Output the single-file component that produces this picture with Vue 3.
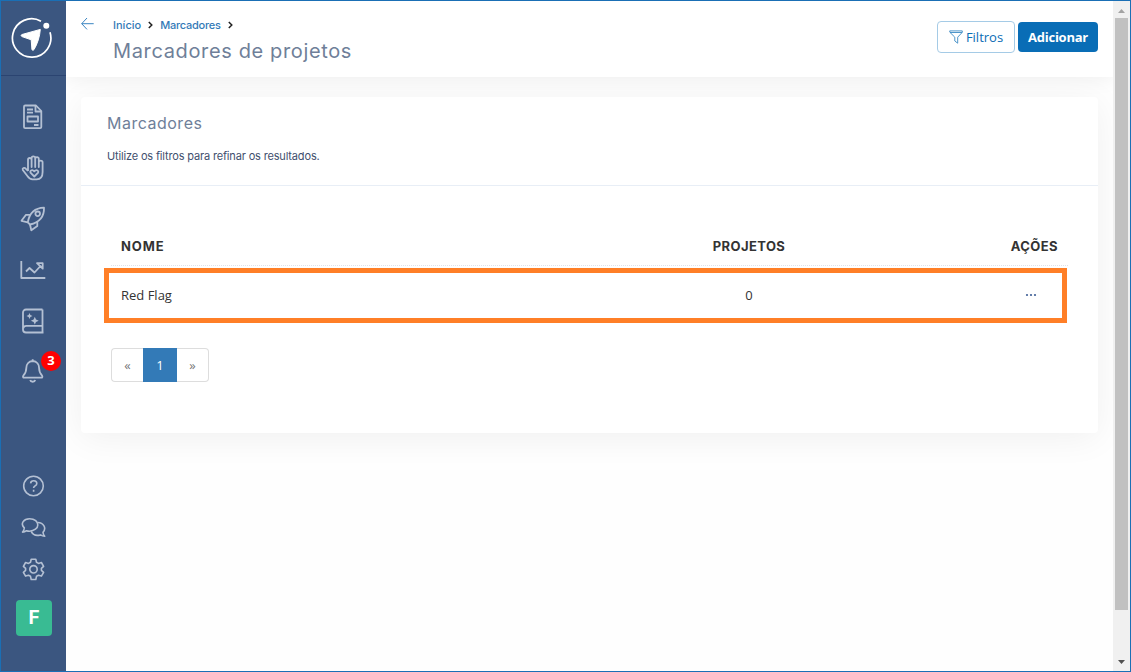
<template>
  <div class="window">
    <aside class="sidebar">
      <div class="brand">
        <svg width="44" height="44" viewBox="0 0 44 44">
          <path d="M31 5.200A19.200 19.200 0 1 0 40 16.300" fill="none" stroke="#fff" stroke-width="1.7" />
          <circle cx="36.300" cy="9.800" r="3" fill="#fff" />
          <path d="M30.300 13.400 12 18.500c-1.200.5-1.100 1.500 0 2.100l9.200 3.200.7 9.500c.2 1.200 1.300 1.300 2.100.3 3.500-6 5.800-13 6.300-20.200Z" fill="#fff" stroke="#fff" stroke-linejoin="round" />
        </svg>
      </div>
      <nav class="menu">
        <a v-for="item in menu" :key="item.name" class="menu-item" :title="item.name">
          <svg width="26" height="26" viewBox="0 0 26 26">
            <path v-for="d in item.paths" :key="d" :d="d" />
            <path v-if="item.solid" class="solid" :d="item.solid" />
          </svg>
          <span v-if="item.badge" class="badge">{{ item.badge }}</span>
        </a>
      </nav>
      <div class="menu-bottom">
        <a v-for="item in bottomMenu" :key="item.name" class="bottom-item" :title="item.name">
          <svg width="26" height="26" viewBox="0 0 26 26">
            <path v-for="d in item.paths" :key="d" :d="d" />
          </svg>
        </a>
        <div class="avatar">F</div>
      </div>
    </aside>

    <main class="content">
      <header class="page-header">
        <svg class="back" width="14" height="14" viewBox="0 0 14 14">
          <path d="M6 1 .7 6.700l5.300 5.700M.7 6.700h12" />
        </svg>
        <div class="heading">
          <div class="breadcrumb">
            <a class="crumb-home">Início</a>
            <svg width="5" height="8" viewBox="0 0 5 8"><path d="m.8 1 3 3-3 3" /></svg>
            <a class="crumb-page">Marcadores</a>
            <svg width="5" height="8" viewBox="0 0 5 8"><path d="m.8 1 3 3-3 3" /></svg>
          </div>
          <h1>Marcadores de projetos</h1>
        </div>
        <div class="actions">
          <button class="btn btn-outline">
            <svg width="14" height="14" viewBox="0 0 14 14">
              <path d="M.7.9h12.600v1.400L8.700 7.200v6L5.800 11V7.200L.9 2.300ZM1 2.500h12" />
            </svg>
            <span>Filtros</span>
          </button>
          <button class="btn btn-primary"><span>Adicionar</span></button>
        </div>
      </header>

      <section class="card">
        <div class="card-header">
          <h2>Marcadores</h2>
          <p>Utilize os filtros para refinar os resultados.</p>
        </div>
        <div class="card-body">
          <div class="table">
            <div class="row row-head">
              <span><b class="th-name">NOME</b></span>
              <span class="center"><b>PROJETOS</b></span>
              <span class="right"><b>AÇÕES</b></span>
            </div>
            <div v-for="row in rows" :key="row.name" class="row row-item">
              <span>{{ row.name }}</span>
              <span class="center">{{ row.projects }}</span>
              <span class="right">
                <svg class="dots" width="12" height="4" viewBox="0 0 12 4">
                  <circle cx="2" cy="2" r="1.1" />
                  <circle cx="6" cy="2" r="1.1" />
                  <circle cx="10" cy="2" r="1.1" />
                </svg>
              </span>
            </div>
          </div>
          <div class="pagination">
            <span class="page">«</span>
            <span class="page active">1</span>
            <span class="page">»</span>
          </div>
        </div>
      </section>
    </main>

    <div class="scrollbar">
      <svg width="17" height="17" viewBox="0 0 17 17"><path d="M5 12h7L8.500 8Z" fill="#a3a3a3" /></svg>
      <div class="thumb"></div>
      <svg width="17" height="17" viewBox="0 0 17 17"><path d="M5 6h7l-3.500 4Z" fill="#505050" /></svg>
    </div>
  </div>
</template>

<script setup>
import { ref } from 'vue'

const menu = ref([
  {
    name: 'Editais',
    paths: [
      'M5.500 1.500H16l5.300 5.500v16q0 1.200-1.200 1.200H5.200q-1.200 0-1.200-1.200V2.700q0-1.200 1.200-1.200Z',
      'M15.500 1.800v5.700h5.700',
      'M7 5.500h6M7 8.700h6M7.500 12.500h10.500v5H7.500ZM14 21h4.500'
    ]
  },
  {
    name: 'Voluntariado',
    paths: [
      'M8 16V4.800a1.800 1.800 0 0 1 3.600 0V12V3.200a1.800 1.800 0 0 1 3.600 0V12V4a1.800 1.800 0 0 1 3.600 0V12V7.500a1.900 1.900 0 0 1 3.800 0V17c0 5-2 7.300-6 7.300h-4c-2.500 0-3.700-1-5-3L2.800 15c-.8-1.800 1.500-3 2.900-1.400L8 16',
      'm14.300 21.500-3.600-3.600c-1.400-2 1.300-4 3.600-1.500 2.300-2.500 5-.5 3.600 1.500Z'
    ]
  },
  {
    name: 'Projetos',
    paths: [
      'M7.800 16.300C9.300 8 14.500 2 24 1.700 24.300 11 18.500 16.500 10 18.500Z',
      'M10.500 8.800H6l-4.500 6 6.300 1.500M17.300 15.500v4.500l-6 4.300-1.300-5.800',
      'M20 7.800a2.300 2.300 0 1 1-4.600 0 2.300 2.300 0 0 1 4.600 0Z'
    ]
  },
  {
    name: 'Indicadores',
    paths: ['M1.300 4v17h24', 'm6 14.500 3.500-3.500 5 4.500L21 8.500M17 6.200h5.700v5.500Z']
  },
  {
    name: 'Conhecimento',
    paths: ['M22.500 1.500H6a3 3 0 0 0-3 3v17a3 3 0 0 0 3 3h17.500M22.500 1.500V24M3.200 20.300q.5-2.500 3-2.500h16.300'],
    solid: 'M9.500 5l.9 2.100 2.100.9-2.100.9-.9 2.100-.9-2.100-2.100-.9 2.100-.9ZM14.800 8.800l1.200 2.700 2.700 1.200-2.700 1.200-1.200 2.700-1.200-2.700-2.700-1.200 2.700-1.200Z'
  },
  {
    name: 'Notificações',
    badge: 3,
    paths: [
      'M12.700 3C8.500 3.300 6.300 6.500 6.300 10c0 4.500-1.500 6-2.900 7.500-.8 1.200-.3 2.200.8 2.200h17c1.100 0 1.600-1 .8-2.200-1.400-1.500-2.900-3-2.900-7.500 0-3.500-2.200-6.700-6.400-7ZM12.700 1.300v2',
      'M10.200 22c.5 2.300 4.500 2.300 5 0'
    ]
  }
])

const bottomMenu = ref([
  {
    name: 'Ajuda',
    paths: [
      'M23.300 13a9.800 9.800 0 1 1-19.600 0 9.800 9.800 0 0 1 19.600 0Z',
      'M10.600 10.400c.3-3.600 6.200-3.300 6.200 0 0 2.500-3.200 2.500-3.200 4.600M13.600 16.700v2'
    ]
  },
  {
    name: 'Conversas',
    paths: [
      'M4.300 12.800C-.2 8.500 4 3.700 9.500 3.700S17.800 7 17.800 10s-3.500 6.200-8.300 6.200c-1.300 0-2.200-.2-3-.5-1.200 1-2.500 1.400-4 1.400 1-.8 1.700-2.300 1.800-4.300Z',
      'M17.800 7.500c5.700.2 9 5.500 5.200 9.700.1 1.700.7 3 1.700 4-1.800 0-3-.5-4.200-1.300-3.500 1-7.500.3-9.300-3.500'
    ]
  },
  {
    name: 'Configurações',
    paths: [
      'M11.200 3.300h4.600l.7 3 2 1.100 2.900-.9 2.200 3.900-2.200 2v1.900l2.200 2-2.200 3.800-2.900-.8-2 1-.7 3.200h-4.600l-.7-3.200-2-1-2.900.8-2.200-3.800 2.200-2v-1.900l-2.200-2 2.200-3.900 2.900.9 2-1.100Z',
      'M17.200 13.300a3.700 3.700 0 1 1-7.400 0 3.700 3.700 0 0 1 7.400 0Z'
    ]
  }
])

const rows = ref([{ name: 'Red Flag', projects: 0 }])
</script>

<style>
body {
  background: #fff;
}
</style>

<style scoped>
.window {
  display: flex;
  box-sizing: border-box;
  width: 1131px;
  height: 672px;
  border: 1px solid #1a6fb5;
  overflow: hidden;
  background: #fefefe;
  font-family: 'Open Sans', sans-serif;
  font-size: 13px;
  color: #333;
}

.sidebar {
  display: flex;
  flex-direction: column;
  width: 65px;
  background: #3b5680;
}

.brand {
  display: flex;
  justify-content: center;
  box-sizing: border-box;
  height: 75px;
  padding: 15px 3px 0 0;
  border-bottom: 1px solid #2b4471;
}

.menu {
  padding-top: 16px;
}

.menu-item {
  position: relative;
  display: flex;
  align-items: center;
  justify-content: center;
  height: 50.8px;
  padding-right: 2px;
}

.menu-item svg,
.bottom-item svg {
  fill: none;
  stroke: #b4c0d3;
  stroke-width: 1.8;
  stroke-linejoin: round;
}

.menu-item .solid {
  fill: #b4c0d3;
  stroke: none;
}

.badge {
  position: absolute;
  top: 5px;
  left: 40px;
  width: 20px;
  height: 20px;
  border-radius: 50%;
  background: #f00;
  color: #fff;
  font-size: 13px;
  font-weight: 700;
  line-height: 19px;
  text-align: center;
}

.menu-bottom {
  display: flex;
  flex-direction: column;
  align-items: center;
  margin-top: auto;
  padding: 0 0 35px 1px;
}

.bottom-item {
  display: flex;
  align-items: center;
  height: 41.5px;
  padding-right: 2px;
}

.bottom-item svg {
  stroke-width: 1.6;
}

.avatar {
  width: 36px;
  height: 36px;
  margin-top: 10px;
  border-radius: 4px;
  background: #39bb93;
  color: #fff;
  font-family: Inter, sans-serif;
  font-size: 19px;
  font-weight: 700;
  line-height: 36px;
  text-align: center;
}

.content {
  flex: 1;
  overflow: hidden;
}

.page-header {
  display: flex;
  align-items: flex-start;
  box-sizing: border-box;
  height: 76px;
  padding: 16px 15px 0;
  background: #fff;
  box-shadow: 0 3px 18px rgba(0, 0, 0, 0.06);
}

.back {
  fill: none;
  stroke: #3b85c2;
}

.heading {
  margin-left: 18px;
  font-family: Inter, sans-serif;
}

.breadcrumb {
  display: flex;
  align-items: center;
  gap: 7px;
  height: 16px;
  font-size: 11px;
  font-weight: 500;
  color: #337ab7;
}

.breadcrumb svg {
  fill: none;
  stroke: #222;
  stroke-width: 1.5;
}

.crumb-page {
  letter-spacing: -0.24px;
}

h1,
h2 {
  margin: 0;
  font-weight: 400;
  color: #6f7f99;
}

h1 {
  margin-top: 5px;
  font-size: 20px;
  line-height: 26px;
  letter-spacing: 0.64px;
}

.actions {
  display: flex;
  align-items: center;
  gap: 3px;
  margin: 4px 0 0 auto;
}

.btn {
  display: flex;
  align-items: center;
  justify-content: center;
  box-sizing: border-box;
  padding: 0;
  border: 0;
  border-radius: 4px;
  font-family: inherit;
  font-size: 13px;
  white-space: nowrap;
}

.btn-outline {
  gap: 3px;
  width: 78px;
  height: 32px;
  border: 1px solid #a5cbe6;
  background: #fff;
  color: #0a6db5;
  font-weight: 500;
}

.btn-outline svg {
  fill: none;
  stroke: #3b8ac4;
  stroke-width: 0.9;
}

.btn-primary {
  width: 80px;
  height: 30px;
  background: #096db6;
  color: #fff;
  font-weight: 700;
  letter-spacing: -0.25px;
}

.card {
  box-sizing: border-box;
  height: 336px;
  margin: 20px 15px 0;
  border-radius: 4px;
  background: #fff;
  box-shadow: 0 5px 35px rgba(0, 0, 0, 0.06);
}

.card-header {
  box-sizing: border-box;
  height: 89px;
  padding: 15px 26px 0;
  border-bottom: 1px solid #e8eef6;
  font-family: Inter, sans-serif;
}

h2 {
  font-size: 16px;
  line-height: 22px;
  letter-spacing: 0.5px;
}

p {
  margin: 14px 0 0;
  font-size: 11px;
  line-height: 16px;
  letter-spacing: -0.16px;
  color: #3f4f6e;
}

.card-body {
  padding: 40px 30px 0;
}

.row {
  display: grid;
  grid-template-columns: 1fr 200px 209px;
  align-items: center;
  box-sizing: border-box;
  padding: 0 10px;
}

.row-head {
  height: 40px;
  border-bottom: 1px dotted #dde2ec;
  font-family: Inter, sans-serif;
  letter-spacing: 0.4px;
}

.th-name {
  letter-spacing: 0.9px;
}

.row-item {
  width: 963px;
  height: 55px;
  margin: 2px 0 0 -7px;
  padding: 0 4px 2px 12px;
  border: 5px solid #ff7f27;
}

.center {
  text-align: center;
}

.right {
  text-align: right;
}

.row-item .right {
  padding: 0 21px 3px 0;
}

.dots {
  fill: #3f5f96;
  vertical-align: middle;
}

.pagination {
  display: flex;
  margin-top: 25px;
}

.page {
  box-sizing: border-box;
  width: 32px;
  height: 34px;
  border: 1px solid #ddd;
  color: #777;
  line-height: 32px;
  text-align: center;
}

.page:first-child {
  border-right: 0;
  border-radius: 4px 0 0 4px;
}

.page:last-child {
  border-left: 0;
  border-radius: 0 4px 4px 0;
}

.page.active {
  width: 34px;
  border-color: #337ab7;
  background: #337ab7;
  color: #fff;
}

.scrollbar {
  display: flex;
  flex-direction: column;
  width: 17px;
  background: #f0f0f0;
}

.thumb {
  height: 592px;
  margin: 0 2px auto;
  background: #c1c1c1;
}
</style>
